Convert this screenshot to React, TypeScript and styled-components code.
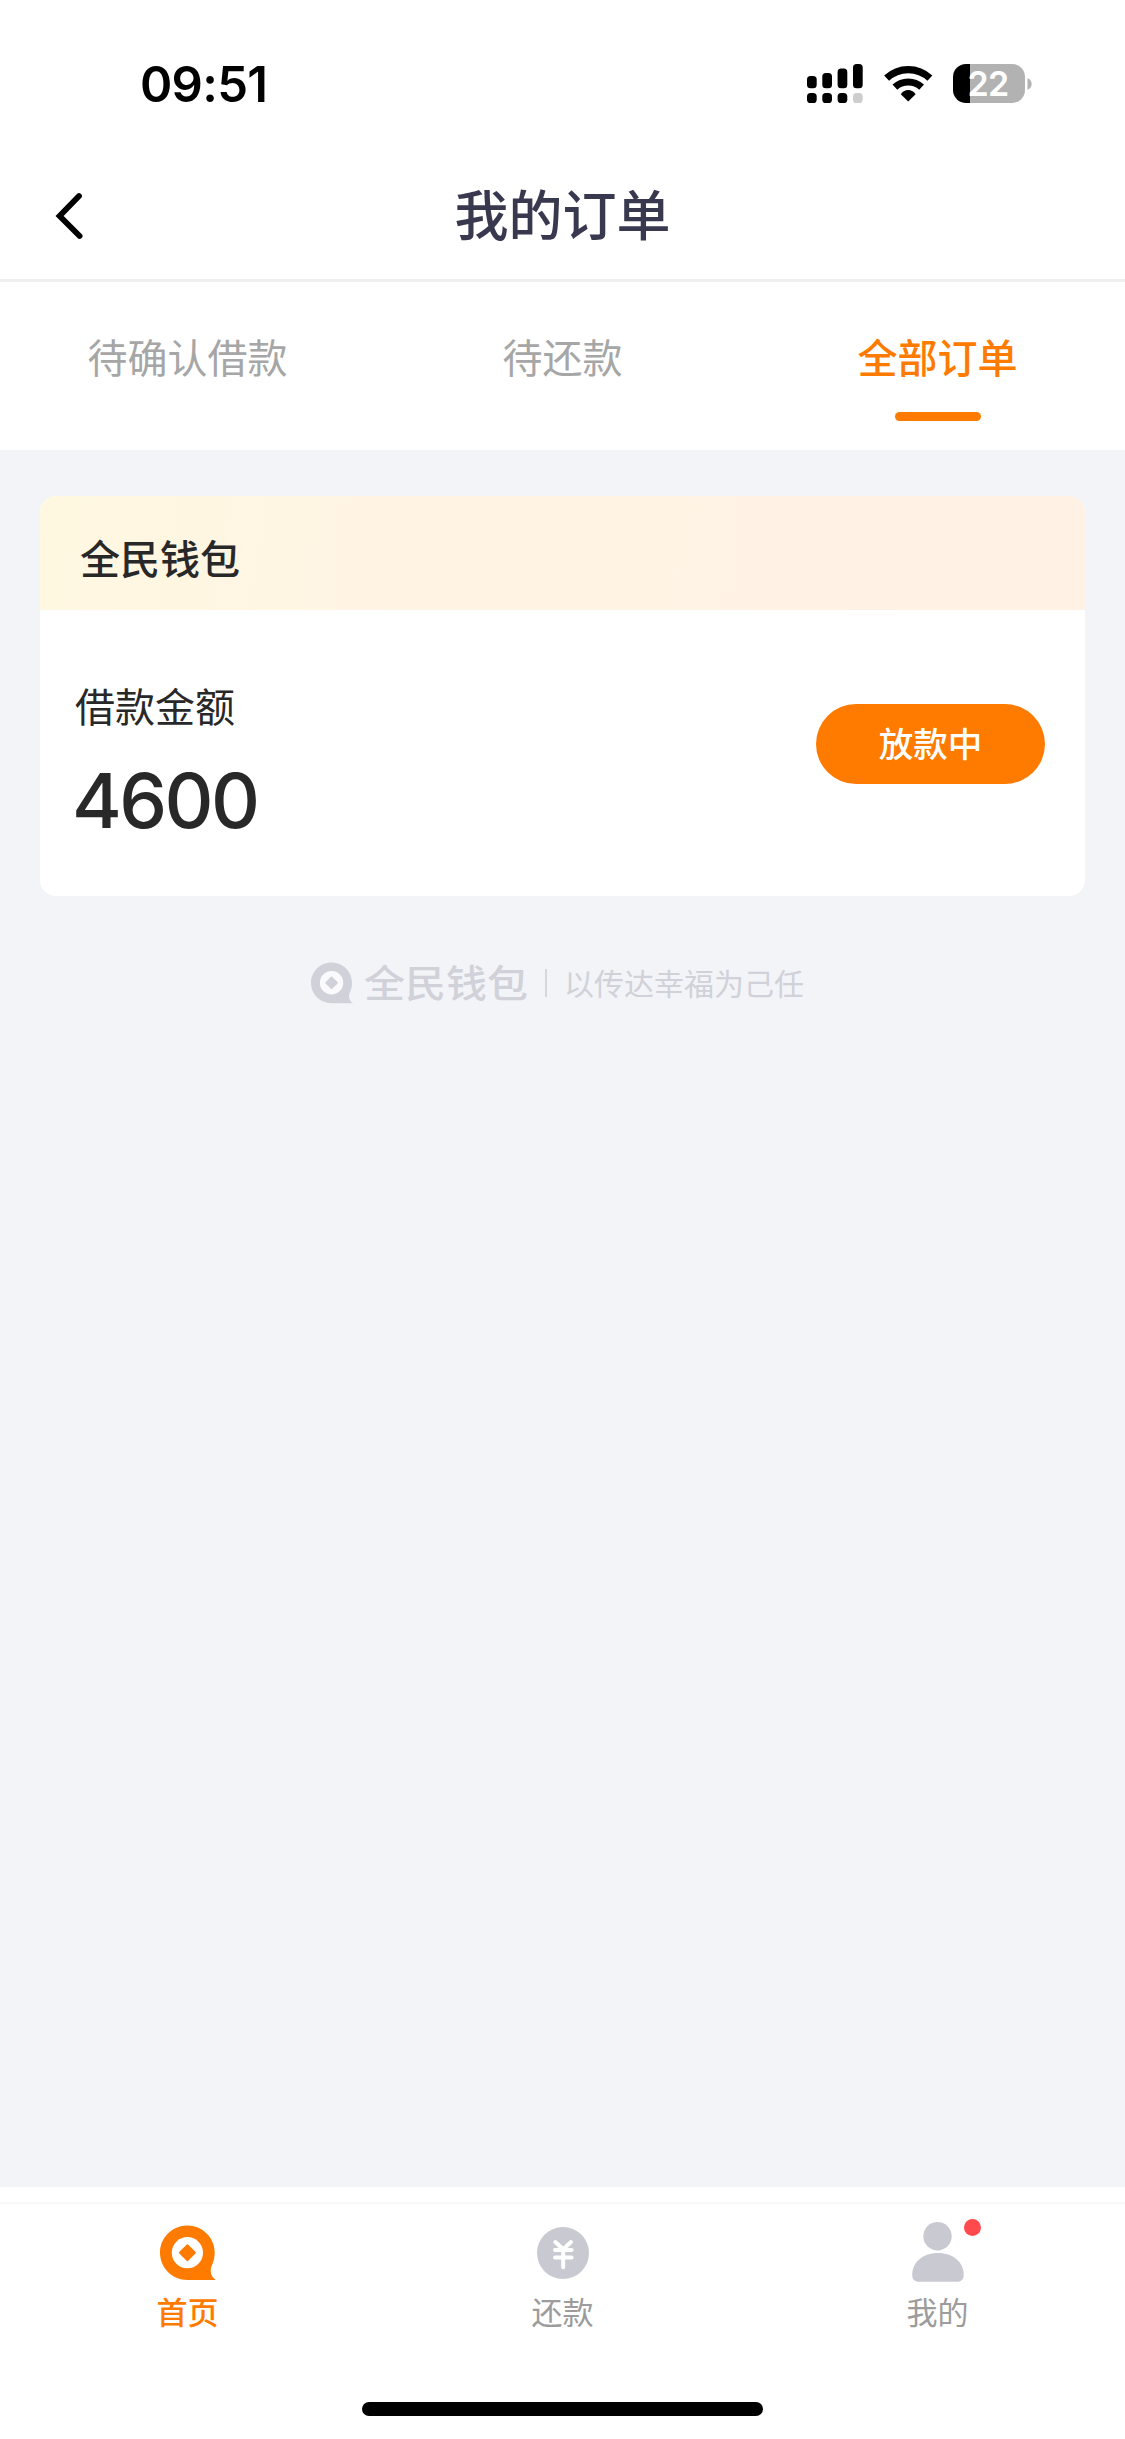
import React from "react";
import styled, { createGlobalStyle } from "styled-components";

const ORANGE = "#ff7b00";
const MUTED = "#c9cad1";
const CJK = `"Noto Sans CJK SC", "Noto Sans", sans-serif`;
const LATIN = `Inter, "Liberation Sans", sans-serif`;

const GlobalStyle = createGlobalStyle`
  *, *::before, *::after { box-sizing: border-box; }
  body { margin: 0; background: #fff; }
  button { border: 0; padding: 0; background: none; font: inherit; color: inherit; }
`;

const Screen = styled.div`
  width: 1125px;
  height: 2439px;
  display: flex;
  flex-direction: column;
  background: #fff;
  font-family: ${CJK};
  color: #282828;
  overflow: hidden;
`;

const StatusBar = styled.div`
  height: 152px;
  flex: none;
  display: flex;
  justify-content: space-between;
  align-items: flex-start;
  padding: 54px 93px 0 140px;
`;

const Clock = styled.time`
  padding-top: 1px;
  font: 600 49px/60px ${LATIN};
  letter-spacing: -0.7px;
  color: #000;
`;

const StatusIcons = styled.div`
  display: flex;
  align-items: flex-start;
  gap: 20.5px;
  padding-top: 9.5px;
`;

const Battery = styled.div`
  display: flex;
  align-items: center;
  gap: 2px;
  height: 40px;
`;

const BatteryBody = styled.div`
  width: 72px;
  height: 39px;
  border-radius: 13px;
  background: linear-gradient(to right, #000 17px, #b2b2b2 17px);
  color: #fff;
  font: 600 34px/39px ${LATIN};
  letter-spacing: -0.8px;
  padding-right: 2px;
  text-align: center;
`;

const Header = styled.header`
  flex: none;
  height: 130px;
  display: grid;
  grid-template-columns: 138px 1fr 138px;
  align-items: center;
  border-bottom: 3px solid #efefef;
`;

const BackButton = styled.button`
  display: flex;
  padding-left: 54px;
`;

const Title = styled.h1`
  margin: 0;
  font-size: 54px;
  line-height: 80px;
  font-weight: 500;
  color: #38384f;
  text-align: center;
  padding-bottom: 6px;
`;

const Tabs = styled.nav`
  flex: none;
  height: 168px;
  display: grid;
  grid-template-columns: repeat(3, 1fr);
`;

const Tab = styled.button<{ $active?: boolean }>`
  display: flex;
  flex-direction: column;
  align-items: center;
  padding-top: 44px;
  font-size: 40px;
  line-height: 60px;
  font-weight: ${(p) => (p.$active ? 500 : 400)};
  color: ${(p) => (p.$active ? ORANGE : "#a6a6a6")};
`;

const TabMark = styled.span`
  width: 86px;
  height: 9px;
  margin-top: 26px;
  border-radius: 5px;
  background: ${ORANGE};
`;

const Content = styled.main`
  flex: none;
  height: 1737px;
  padding: 45.5px 40px 0;
  background: #f3f4f7;
`;

const Card = styled.section`
  height: 400.5px;
  border-radius: 16px;
  background: #fff;
  overflow: hidden;
`;

const CardHead = styled.h2`
  margin: 0;
  height: 114px;
  padding: 31px 40px 0;
  font-size: 40px;
  line-height: 60px;
  font-weight: 500;
  background: linear-gradient(100deg, #fff8e1 0%, #fff5e3 25%, #fff3e5 65%, #fff1e4 100%);
`;

const CardBody = styled.div`
  display: flex;
  justify-content: space-between;
  align-items: flex-start;
  padding: 65px 40px 0 35px;
`;

const Label = styled.div`
  font-size: 40px;
  line-height: 60px;
`;

const Amount = styled.div`
  margin: 20px 0 0 -3px;
  font: 500 76px/90px ${LATIN};
  letter-spacing: -2.6px;
`;

const StatusButton = styled.button`
  width: 229px;
  height: 80px;
  margin-top: 29px;
  border-radius: 40px;
  background: ${ORANGE};
  color: #fff;
  font-size: 34.5px;
  line-height: 74px;
  font-weight: 500;
  padding-bottom: 4px;
`;

const BrandLine = styled.footer`
  display: flex;
  align-items: center;
  justify-content: center;
  height: 44px;
  margin: 65px 10px 0 0;
  color: #d0d1d9;
`;

const Wordmark = styled.span`
  margin-left: 11px;
  font-size: 41px;
  line-height: 44px;
  font-weight: 500;
  transform: translateY(-3px) scaleY(0.92);
`;

const Divider = styled.span`
  width: 2px;
  height: 28px;
  margin: 0 17px;
  background: #d6d7de;
`;

const Slogan = styled.span`
  font-size: 30px;
  line-height: 44px;
  padding-bottom: 2px;
`;

const BottomBar = styled.nav`
  flex: none;
  height: 252px;
  padding-top: 15px;
  display: flex;
  flex-direction: column;
  align-items: center;
`;

const BottomItems = styled.div`
  width: 100%;
  height: 200px;
  border-top: 2px solid #f8f8f8;
  display: grid;
  grid-template-columns: repeat(3, 1fr);
`;

const BottomItem = styled.button<{ $active?: boolean }>`
  display: flex;
  flex-direction: column;
  align-items: center;
  padding-top: 18px;
  font-size: 31px;
  line-height: 44px;
  font-weight: ${(p) => (p.$active ? 500 : 400)};
  color: ${(p) => (p.$active ? ORANGE : "#9c9c9c")};
`;

const IconBox = styled.span<{ $drop?: number }>`
  position: relative;
  display: flex;
  justify-content: center;
  align-items: flex-start;
  width: 60px;
  height: 67px;
  padding-top: ${(p) => p.$drop ?? 0}px;
`;

const RedDot = styled.i`
  position: absolute;
  top: -3px;
  left: 56px;
  width: 17px;
  height: 17px;
  border-radius: 50%;
  background: #ff4a4d;
`;

const HomeIndicator = styled.div`
  width: 401px;
  height: 14px;
  border-radius: 7px;
  background: #000;
`;

const Signal = () => {
  const bars = [
    { x: 0, y: 12 },
    { x: 15.3, y: 9 },
    { x: 30.6, y: 4.6 },
    { x: 46, y: 0 },
  ];
  return (
    <svg width="56" height="40" viewBox="0 0 56 40">
      {bars.map((b, i) => (
        <g key={b.x}>
          <rect x={b.x} y={b.y} width="9.7" height={24.3 - b.y} rx="3.6" />
          <rect x={b.x} y="29" width="9.7" height="10" rx="3.6" fill={i === 3 ? "#cdcdcd" : "#000"} />
        </g>
      ))}
    </svg>
  );
};

const Wifi = () => (
  <svg width="49" height="40" viewBox="0 0 49 40">
    <g fill="none" stroke="#000" strokeWidth="7.2">
      <path d="M2.6 14.2 A31.5 31.5 0 0 1 45.9 14.2" />
      <path d="M10.9 23.1 A20 20 0 0 1 37.6 23.1" />
    </g>
    <path d="M24.2 37.6 L16.8 30.2 A8.7 8.7 0 0 1 31.6 30.2 Z" />
  </svg>
);

/* Round speech-bubble mark with a coin hole */
const BrandMark = ({ size, color, hole }: { size: number; color: string; hole: string }) => (
  <svg width={size} height={size} viewBox="0 0 56 55">
    <path
      fill={color}
      d="M27.3 0 C42.4 0 54.7 12 54.7 27 C54.7 32.5 53.5 36.5 51.6 40.5 C49.6 46 51 51.5 56 54.4 L27.3 54.4 C12.2 54.4 0 42.2 0 27.2 C0 12.2 12.2 0 27.3 0 Z"
    />
    <circle cx="27.4" cy="27.2" r="15.6" fill={hole} />
    <path
      d="M27.4 20 L34.6 27.2 L27.4 34.4 L20.2 27.2 Z"
      fill={color}
      stroke={color}
      strokeWidth="2.4"
      strokeLinejoin="round"
    />
  </svg>
);

const YuanIcon = () => (
  <svg width="52" height="52" viewBox="0 0 52 52">
    <circle cx="26" cy="26" r="26" fill={MUTED} />
    <g fill="none" stroke="#fff" strokeWidth="4" strokeLinecap="round" strokeLinejoin="round">
      <path d="M18.3 15 L26.2 22.2 L34 15" />
      <path d="M18 23 H34.6 M18 30.6 H34.6 M26.2 22.5 V40.2" />
    </g>
  </svg>
);

const PersonIcon = () => (
  <svg width="52" height="60" viewBox="0 0 52 60">
    <g fill={MUTED}>
      <circle cx="25.5" cy="14.3" r="14.2" />
      <path d="M26 31 C41 31 51.7 40 51.7 53 C51.7 57.5 49 59.8 45.5 59.8 H6.5 C3 59.8 0.2 57.5 0.2 53 C0.2 40 11 31 26 31 Z" />
    </g>
  </svg>
);

export default function App() {
  return (
    <Screen>
      <GlobalStyle />
      <StatusBar>
        <Clock>09:51</Clock>
        <StatusIcons>
          <Signal />
          <Wifi />
          <Battery>
            <BatteryBody>22</BatteryBody>
            <svg width="5" height="12" viewBox="0 0 5 12">
              <path d="M0.5 0 C6 2.5 6 9.5 0.5 12 Z" fill="#b2b2b2" />
            </svg>
          </Battery>
        </StatusIcons>
      </StatusBar>

      <Header>
        <BackButton aria-label="返回">
          <svg width="30" height="48" viewBox="0 0 30 48">
            <path
              d="M25 4 L5.6 24 L25.6 44"
              fill="none"
              stroke="#000"
              strokeWidth="5.8"
              strokeLinecap="round"
              strokeLinejoin="miter"
            />
          </svg>
        </BackButton>
        <Title>我的订单</Title>
      </Header>

      <Tabs>
        <Tab>待确认借款</Tab>
        <Tab>待还款</Tab>
        <Tab $active>
          全部订单
          <TabMark />
        </Tab>
      </Tabs>

      <Content>
        <Card>
          <CardHead>全民钱包</CardHead>
          <CardBody>
            <div>
              <Label>借款金额</Label>
              <Amount>4600</Amount>
            </div>
            <StatusButton>放款中</StatusButton>
          </CardBody>
        </Card>
        <BrandLine>
          <BrandMark size={42} color="#d0d1d9" hole="#fafafc" />
          <Wordmark>全民钱包</Wordmark>
          <Divider />
          <Slogan>以传达幸福为己任</Slogan>
        </BrandLine>
      </Content>

      <BottomBar>
        <BottomItems>
          <BottomItem $active>
            <IconBox $drop={3}>
              <BrandMark size={56} color={ORANGE} hole="#fff" />
            </IconBox>
            首页
          </BottomItem>
          <BottomItem>
            <IconBox $drop={5}>
              <YuanIcon />
            </IconBox>
            还款
          </BottomItem>
          <BottomItem>
            <IconBox>
              <PersonIcon />
              <RedDot />
            </IconBox>
            我的
          </BottomItem>
        </BottomItems>
        <HomeIndicator />
      </BottomBar>
    </Screen>
  );
}
